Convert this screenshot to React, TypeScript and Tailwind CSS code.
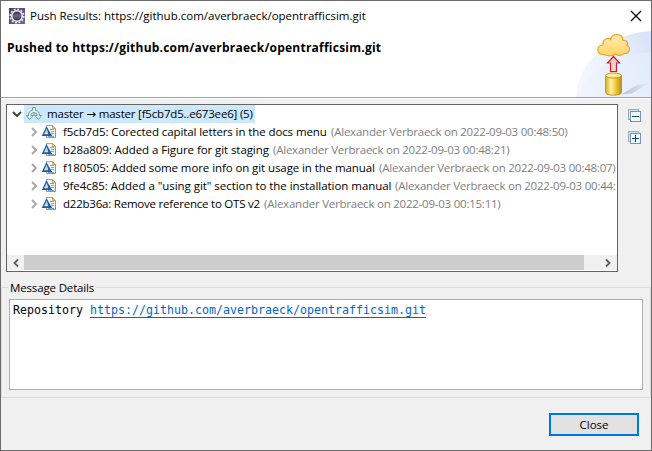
type Commit = { id: string; msg: string; meta: string; box: string };

const commits: Commit[] = [
  { id: 'f5cb7d5', msg: 'Corected capital letters in the docs menu', meta: '(Alexander Verbraeck on 2022-09-03 00:48:50)', box: 'w-[268px] tracking-[-0.1px]' },
  { id: 'b28a809', msg: 'Added a Figure for git staging', meta: '(Alexander Verbraeck on 2022-09-03 00:48:21)', box: 'w-[210px] tracking-[-0.08px]' },
  { id: 'f180505', msg: 'Added some more info on git usage in the manual', meta: '(Alexander Verbraeck on 2022-09-03 00:48:07)', box: 'w-[316px] tracking-[-0.09px]' },
  { id: '9fe4c85', msg: 'Added a "using git" section to the installation manual', meta: '(Alexander Verbraeck on 2022-09-03 00:44:', box: 'w-[332px] tracking-[-0.04px]' },
  { id: 'd22b36a', msg: 'Remove reference to OTS v2', meta: '(Alexander Verbraeck on 2022-09-03 00:15:11)', box: 'w-[201px] tracking-[-0.22px]' },
];

function AppIcon() {
  return (
    <svg width="16" height="16" viewBox="0 0 16 16">
      <defs>
        <linearGradient id="app" x1="0" y1="0" x2="1" y2="1">
          <stop offset="0" stopColor="#4b3d5c" />
          <stop offset="1" stopColor="#7462a8" />
        </linearGradient>
        <linearGradient id="ball" x1="0" y1="0" x2="0" y2="1">
          <stop offset="0" stopColor="#302a42" />
          <stop offset="0.5" stopColor="#6c667e" />
          <stop offset="1" stopColor="#282238" />
        </linearGradient>
      </defs>
      <rect width="16" height="16" fill="url(#app)" />
      <circle cx="8" cy="8" r="6.8" fill="none" stroke="#ece9f2" strokeWidth="1.6" strokeDasharray="1.9 1.66" />
      <circle cx="8" cy="8" r="5.3" fill="url(#ball)" stroke="#f0edf5" strokeWidth="1.5" />
    </svg>
  );
}

function HeaderArt() {
  return (
    <svg width="76" height="66" viewBox="0 0 76 66">
      <defs>
        <linearGradient id="sky" gradientUnits="userSpaceOnUse" x1="0" y1="60" x2="76" y2="20">
          <stop offset="0" stopColor="#f5f8ff" />
          <stop offset="0.6" stopColor="#ebf1fd" />
          <stop offset="1" stopColor="#d9e4fa" />
        </linearGradient>
        <linearGradient id="sky2" gradientUnits="userSpaceOnUse" x1="4" y1="60" x2="76" y2="30">
          <stop offset="0" stopColor="#eff4fe" />
          <stop offset="0.6" stopColor="#e9f0fd" />
          <stop offset="1" stopColor="#e2ebfb" />
        </linearGradient>
        <linearGradient id="cloud" x1="0" y1="0" x2="0" y2="1">
          <stop offset="0" stopColor="#ffeaad" />
          <stop offset="1" stopColor="#ffd566" />
        </linearGradient>
        <linearGradient id="can" x1="0" y1="0" x2="1" y2="0">
          <stop offset="0" stopColor="#dcae25" />
          <stop offset="0.35" stopColor="#fff2a2" />
          <stop offset="0.6" stopColor="#f1ce45" />
          <stop offset="1" stopColor="#c18b10" />
        </linearGradient>
        <linearGradient id="shade" x1="0" y1="0" x2="1" y2="0">
          <stop offset="0" stopColor="#a5aebb" />
          <stop offset="1" stopColor="#dfe8f8" />
        </linearGradient>
      </defs>
      <path d="M1 66C3 28 38 2 76 0V66Z" fill="url(#sky)" />
      <path d="M1 66C12 40 38 24 76 21V66Z" fill="url(#sky2)" />
      <path d="M46 63.500L62 54L74 52L57 62.500Z" fill="url(#shade)" opacity="0.7" />
      <path d="M28.500 23.500C21 24 21 14.500 28 14C27 8 34 6 35.500 8.500C37 1.500 48 2 48 9.500C52 9 53.500 12 52 14.500C56 15.500 55 23 49 22.500C47 25 43 25 40.500 23C36 26 32 25 28.500 23.500Z" fill="url(#cloud)" stroke="#e3a72f" strokeWidth="1.200" />
      <path d="M38.500 25.500L44.500 32H41.500V40.500H35.500V32H32.500Z" fill="#f5cfd2" stroke="#cf202b" strokeWidth="1.200" />
      <path d="M30.500 44.500V61.500C30.500 65 46.500 65 46.500 61.500V44.500" fill="url(#can)" stroke="#c4961d" />
      <ellipse cx="38.500" cy="44.500" rx="8" ry="2.500" fill="#ffe991" stroke="#c4961d" />
    </svg>
  );
}

function PushIcon() {
  return (
    <svg width="16" height="16" viewBox="0 0 16 16" className="shrink-0" fill="#e2f3ee" stroke="#6f9f95" strokeWidth="1">
      <path d="M6.500 1.500H9.500V4.500C12.500 5 13.500 6.500 13.500 9.500H15.500L12.500 13.500L8.800 9.500H11C11 8 10.500 7 8.500 6.500H7.500C5.500 7 5 8 5 9.500H7.200L3.500 13.500L0.500 9.500H2.500C2.500 6.500 3.500 5 6.500 4.500Z" />
      <path d="M8 6.500V10" />
    </svg>
  );
}

function CommitIcon() {
  return (
    <svg width="16" height="16" viewBox="0 0 16 16">
      <path d="M4.500 1.500H10.500L13.500 4.500V13.500H4.500Z" fill="#f3f7fc" stroke="#8296b2" />
      <path d="M4.500 1.500H10.500" stroke="#c7a75b" />
      <path d="M10.500 1.500V4.500H13.500Z" fill="#e9c675" stroke="#c5a052" strokeWidth="0.800" />
      <path d="M8 5.500H12M9 7.500H12M9 9.500H12M6 12.500H12" stroke="#6f9ac6" strokeWidth="0.900" />
      <path d="M4.500 3.500L8.800 11H1Z" fill="#c3dcee" stroke="#24639a" strokeWidth="1.300" />
      <path d="M4.800 4L6.500 11H9Z" fill="#1f5c94" />
      <path d="M0 11.500H10" stroke="#1d5b96" />
    </svg>
  );
}

function StackIcon({ plus }: { plus?: boolean }) {
  return (
    <svg width="13" height="13" viewBox="0 0 13 13" shapeRendering="crispEdges">
      <rect x="0.500" y="0.500" width="10" height="10" fill="#c6e3f0" stroke="#9badc4" />
      <rect x="2.500" y="2.500" width="10" height="10" fill="#eefaff" stroke="#7e94b2" />
      <path d={plus ? 'M4 7.500H11M7.500 4V11' : 'M4 7.500H11'} stroke="#114a80" />
    </svg>
  );
}

function Chevron({ d, className }: { d: string; className: string }) {
  return (
    <svg width="10" height="10" viewBox="0 0 10 10" fill="none" strokeWidth="1.900" className={`shrink-0 ${className}`}>
      <path d={d} stroke="currentColor" />
    </svg>
  );
}

export default function App() {
  return (
    <div className="flex h-[451px] w-[652px] flex-col overflow-hidden border border-[#6b6b6b] bg-[#f0f0f0] font-['Open_Sans',sans-serif] text-[11.5px] leading-[18px] whitespace-pre text-black">
      <header className="flex h-[97px] shrink-0 justify-between border-b border-[#a0a0a0] bg-white">
        <div className="flex flex-col">
          <div className="flex h-[30px] items-center pl-2">
            <AppIcon />
            <span className="pl-[5px]">Push Results: https://github.com/averbraeck/opentrafficsim.git</span>
          </div>
          <h1 className="pt-[8px] pl-[6px] text-[12px] font-bold tracking-[0.23px]">Pushed to https://github.com/averbraeck/opentrafficsim.git</h1>
        </div>
        <div className="flex flex-col items-end">
          <div className="flex h-[30px] items-center pr-[9px]">
            <svg width="12" height="12" viewBox="0 0 12 12" stroke="#000" strokeWidth="1.100">
              <path d="M1 1L11 11M11 1L1 11" />
            </svg>
          </div>
          <HeaderArt />
        </div>
      </header>
      <div className="h-px shrink-0 bg-white" />

      <main className="flex shrink-0 pt-[5px] pl-[5px]">
        <section className="flex h-[168px] w-[612px] flex-col border border-[#646464] bg-white">
          <div className="flex h-[18px] items-center pl-[5px]">
            <Chevron d="M1 3L5 7L9 3" className="text-[#404040]" />
            <div className="ml-[2px] flex h-[18px] w-[231px] items-center bg-[#cce8ff] pl-[2px]">
              <PushIcon />
              <span className="pl-[5px] tracking-[-0.19px]">master <span className="font-['DejaVu_Sans',sans-serif]">→</span> master [f5cb7d5..e673ee6] (5)</span>
            </div>
          </div>
          {commits.map((c) => (
            <div key={c.id} className="flex h-[18px] items-center overflow-hidden pl-[22px]">
              <Chevron d="M3 1L7 5L3 9" className="text-[#a6a6a6]" />
              <span className="ml-[3px] shrink-0"><CommitIcon /></span>
              <span className={`ml-[5px] shrink-0 ${c.box}`}>{c.id}: {c.msg}</span>
              <span className="shrink-0 tracking-[-0.23px] text-[#808080]">{c.meta}</span>
            </div>
          ))}
          <div className="mt-auto mb-px flex h-[15px] items-center justify-between bg-[#f0f0f0]">
            <span className="flex w-[17px] justify-center"><Chevron d="M7 1.500L3.500 5L7 8.500" className="text-[#606060]" /></span>
            <div className="h-[15px] w-[560px] bg-[#cdcdcd]" />
            <span className="flex w-[33px] justify-end pr-[4px]"><Chevron d="M3 1.500L6.500 5L3 8.500" className="text-[#606060]" /></span>
          </div>
        </section>
        <aside className="flex flex-col gap-[9px] pt-[5px] pl-[10px]">
          <StackIcon />
          <StackIcon plus />
        </aside>
      </main>

      <fieldset className="mt-[6px] flex h-[120px] shrink-0 flex-col rounded-none border border-[#dcdcdc] px-[7px]">
        <legend className="ml-[-1px] h-[18px] px-[2px] leading-[19px] tracking-[-0.15px]">Message Details</legend>
        <div className="mt-[3px] h-[91px] w-[634px] border border-[#abadb3] bg-white pt-px pl-[3px] font-['DejaVu_Sans_Mono',monospace] text-[11.63px]">
          Repository <a className="border-b border-[#0066cc] text-[#0066cc]">https://github.com/averbraeck/opentrafficsim.git</a>
        </div>
      </fieldset>

      <footer className="flex justify-end pt-[15px] pr-[12px]">
        <button className="h-[23px] w-[90px] border-2 border-[#0078d7] bg-[#e1e1e1] leading-[18px]">Close</button>
      </footer>
    </div>
  );
}
